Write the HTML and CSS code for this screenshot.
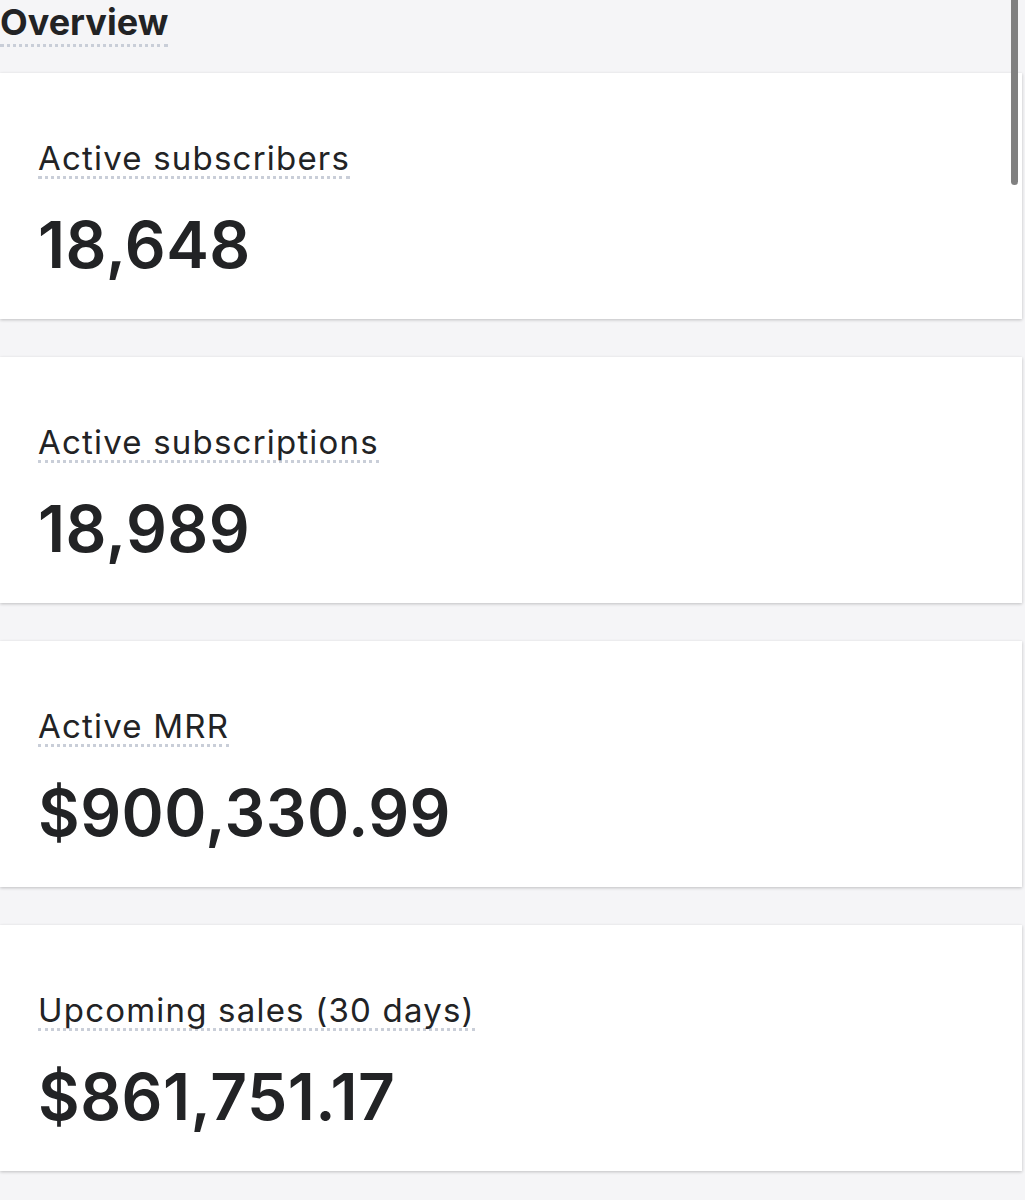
FILE: index.html
```html
<!DOCTYPE html>
<html>
<head>
  <title>Overview</title>
  <link rel="stylesheet" href="styles.css">
</head>
<body>
  <div class="page">
    <div class="header">
      <span class="title">Overview</span>
    </div>

    <div class="cards">
      <div class="card">
        <span class="label">Active subscribers</span>
        <div class="value">18,648</div>
      </div>
      <div class="card">
        <span class="label">Active subscriptions</span>
        <div class="value">18,989</div>
      </div>
      <div class="card">
        <span class="label">Active MRR</span>
        <div class="value">$900,330.99</div>
      </div>
      <div class="card">
        <span class="label">Upcoming sales (30 days)</span>
        <div class="value">$861,751.17</div>
      </div>
    </div>

    <div class="scrollbar"></div>
  </div>
</body>
</html>
```

FILE: styles.css
```css
body {
  margin: 0;
  background-color: #f5f5f7;
  font-family: Inter, "Liberation Sans", sans-serif;
  color: #222325;
}

.page {
  position: relative;
  width: 1025px;
  height: 1200px;
  overflow: hidden;
}

.header {
  height: 73px;
  box-sizing: border-box;
}

.title {
  display: inline-block;
  font-size: 36px;
  font-weight: 700;
  line-height: 44px;
  border-bottom: 3px dotted #c9ced8;
}

.cards {
  display: flex;
  flex-direction: column;
  gap: 38px;
}

.card {
  width: 1022px;
  height: 246px;
  box-sizing: border-box;
  background-color: #ffffff;
  box-shadow: 0 1px 3px rgba(0, 0, 0, 0.22);
  padding: 67px 38px 0;
}

.label {
  display: inline-block;
  font-size: 33px;
  letter-spacing: 1.2px;
  line-height: 36px;
  border-bottom: 3px dotted #c9ced8;
}

.value {
  margin-top: 26px;
  font-size: 64px;
  font-weight: 600;
  letter-spacing: 0.5px;
  line-height: 80px;
}

.scrollbar {
  position: absolute;
  top: 0;
  left: 1011px;
  width: 7px;
  height: 185px;
  background-color: #808080;
  border-radius: 0 0 4px 4px;
}
```
